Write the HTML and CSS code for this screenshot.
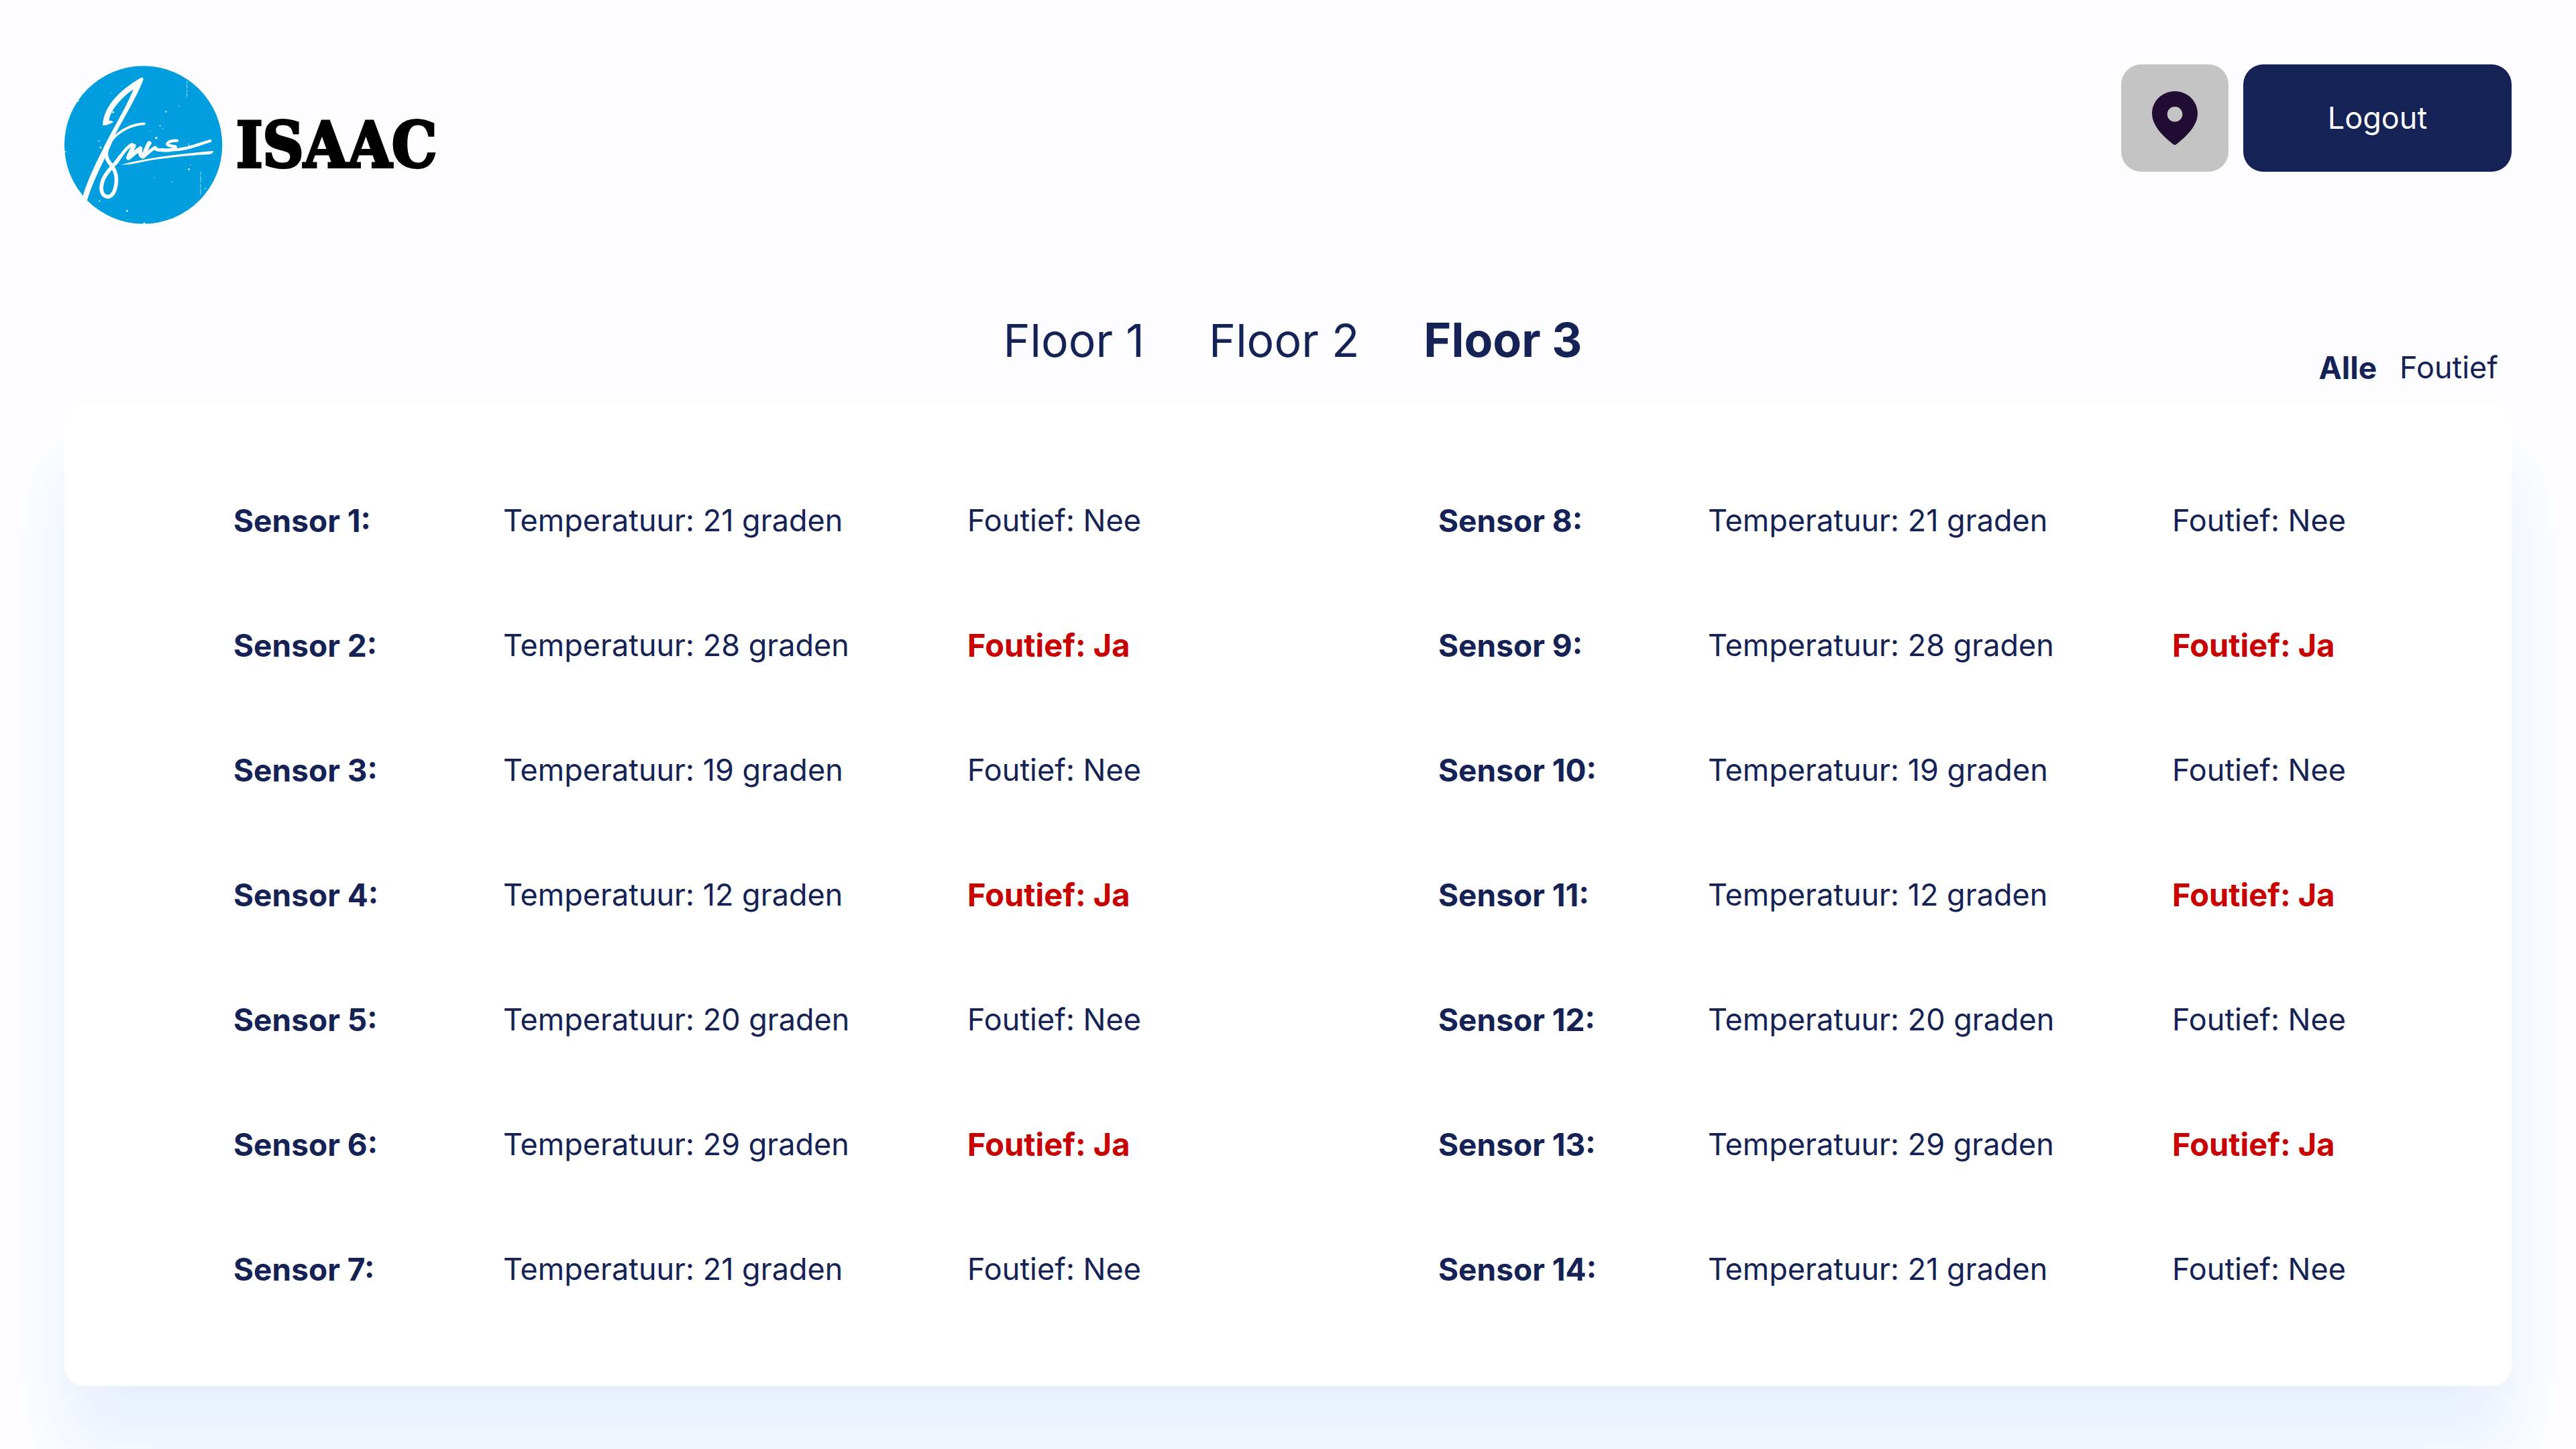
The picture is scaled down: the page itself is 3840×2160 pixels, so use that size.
FILE: index.html
```html
<!DOCTYPE html>
<html lang="nl">
<head>
  <meta charset="utf-8">
  <meta name="viewport" content="width=device-width, initial-scale=1">
  <title>ISAAC sensoren</title>
  <link rel="stylesheet" href="styles.css">
</head>
<body>
  <header class="header">
    <a class="logo" href="#">
      <svg class="logo-mark" viewBox="48 48 708 720" aria-hidden="true">
        <circle cx="401" cy="408" r="353" fill="#009ddf"/>
        <g fill="#fff">
          <path d="M386 110Q402 102 401 114C384 172 300 312 273 366C262 398 240 446 226 474C190 546 166 602 149 658L130 638C150 570 188 490 222 424C250 362 335 222 356 160C300 198 250 258 248 301Q262 296 267 307L235 320L219 320C224 232 300 160 386 110Z"/>
          <path d="M302 497C400 470 540 450 714 435Q714 445 700 450C580 456 440 472 378 488L340 495Z"/>
        </g>
        <g fill="none" stroke="#fff" stroke-linecap="round" stroke-linejoin="round">
          <path stroke-width="11" d="M405 313C350 316 300 342 266 378"/>
          <path stroke-width="17" d="M268 372C242 402 228 432 238 466C248 498 284 512 280 572C277 618 260 640 242 640C214 638 206 604 220 566C238 520 278 496 296 462"/>
          <path stroke-width="14" d="M280 488C305 450 325 420 348 407"/>
          <path stroke-width="19" d="M350 410L358 412C352 428 338 450 334 466C356 452 372 432 388 424C384 440 386 456 400 460C410 440 418 412 428 400"/>
          <path stroke-width="15" d="M404 458C424 442 440 426 454 420C456 430 470 432 488 430"/>
          <path stroke-width="13" d="M470 429C490 436 510 435 530 430C590 430 640 408 700 390"/>
          <path stroke-width="13" d="M552 389C520 388 496 402 514 410C526 414 548 412 546 420C540 430 510 430 484 432"/>
        </g>
        <g fill="#fff">
          <circle cx="459" cy="377" r="5"/><circle cx="476" cy="322" r="3"/><circle cx="488" cy="335" r="2"/>
          <circle cx="502" cy="259" r="4" opacity=".7"/><circle cx="560" cy="234" r="2"/><circle cx="266" cy="262" r="4"/>
          <circle cx="255" cy="174" r="2" opacity=".6"/><circle cx="210" cy="420" r="4"/><circle cx="202" cy="391" r="3"/>
          <circle cx="605" cy="517" r="4"/><circle cx="611" cy="497" r="2"/><circle cx="452" cy="553" r="2"/>
          <circle cx="529" cy="574" r="2"/><circle cx="205" cy="659" r="3"/><circle cx="328" cy="703" r="4"/>
          <circle cx="678" cy="604" r="3" opacity=".7"/><circle cx="109" cy="211" r="4"/><circle cx="405" cy="760" r="5"/>
          <circle cx="432" cy="345" r="2" opacity=".6"/><circle cx="52" cy="439" r="3"/>
        </g>
        <g fill="none" stroke="#fff" stroke-width="2">
          <path stroke-dasharray="12 4 18 6" d="M596 122V193"/>
          <path stroke-dasharray="16 5 26 8" d="M657 528V636"/>
          <path d="M604 400V418"/>
        </g>
      </svg>
      <span class="logo-name">ISAAC</span>
    </a>
    <div class="actions">
      <button class="button button-icon" type="button" aria-label="Locatie">
        <svg class="pin" viewBox="0 0 68 80" aria-hidden="true">
          <path fill="#210d33" fill-rule="evenodd" d="M34 0C15 0 0 15 0 33C0 53 20 70 32 79.300Q34 80.500 36 79.300C48 70 68 53 68 33C68 15 53 0 34 0ZM34 23A11.300 11.300 0 1 1 34 45.600A11.300 11.300 0 1 1 34 23Z"/>
        </svg>
      </button>
      <button class="button button-primary" type="button">Logout</button>
    </div>
  </header>

  <main class="main">
    <div class="toolbar">
      <nav class="tabs" aria-label="Verdieping">
        <a class="tab" href="#">Floor 1</a>
        <a class="tab" href="#">Floor 2</a>
        <a class="tab tab-active" href="#" aria-current="page">Floor 3</a>
      </nav>
      <nav class="filters" aria-label="Filter">
        <a class="filter filter-active" href="#" aria-current="true">Alle</a>
        <a class="filter" href="#">Foutief</a>
      </nav>
    </div>

    <section class="card">
      <table class="sensors">
        <tbody>
          <tr><th scope="row">Sensor 1:</th><td>Temperatuur: 21 graden</td><td>Foutief: Nee</td></tr>
          <tr><th scope="row">Sensor 2:</th><td>Temperatuur: 28 graden</td><td class="fault">Foutief: Ja</td></tr>
          <tr><th scope="row">Sensor 3:</th><td>Temperatuur: 19 graden</td><td>Foutief: Nee</td></tr>
          <tr><th scope="row">Sensor 4:</th><td>Temperatuur: 12 graden</td><td class="fault">Foutief: Ja</td></tr>
          <tr><th scope="row">Sensor 5:</th><td>Temperatuur: 20 graden</td><td>Foutief: Nee</td></tr>
          <tr><th scope="row">Sensor 6:</th><td>Temperatuur: 29 graden</td><td class="fault">Foutief: Ja</td></tr>
          <tr><th scope="row">Sensor 7:</th><td>Temperatuur: 21 graden</td><td>Foutief: Nee</td></tr>
        </tbody>
      </table>
      <table class="sensors">
        <tbody>
          <tr><th scope="row">Sensor 8:</th><td>Temperatuur: 21 graden</td><td>Foutief: Nee</td></tr>
          <tr><th scope="row">Sensor 9:</th><td>Temperatuur: 28 graden</td><td class="fault">Foutief: Ja</td></tr>
          <tr><th scope="row">Sensor 10:</th><td>Temperatuur: 19 graden</td><td>Foutief: Nee</td></tr>
          <tr><th scope="row">Sensor 11:</th><td>Temperatuur: 12 graden</td><td class="fault">Foutief: Ja</td></tr>
          <tr><th scope="row">Sensor 12:</th><td>Temperatuur: 20 graden</td><td>Foutief: Nee</td></tr>
          <tr><th scope="row">Sensor 13:</th><td>Temperatuur: 29 graden</td><td class="fault">Foutief: Ja</td></tr>
          <tr><th scope="row">Sensor 14:</th><td>Temperatuur: 21 graden</td><td>Foutief: Nee</td></tr>
        </tbody>
      </table>
    </section>
  </main>
</body>
</html>
```
FILE: styles.css
```css
* {
  box-sizing: border-box;
}

body {
  margin: 0;
  padding: 96px 96px 94px;
  background: #fdfdff;
  color: #152255;
  font-family: Inter, "Liberation Sans", sans-serif;
  font-size: 45px;
  line-height: 56px;
}

a {
  color: inherit;
  text-decoration: none;
}

.header {
  display: flex;
  justify-content: space-between;
  align-items: flex-start;
}

.logo {
  display: flex;
  align-items: center;
  gap: 20px;
}

.logo-mark {
  display: block;
  width: 236px;
  height: 240px;
}

.logo-name {
  color: #000;
  font-family: "DejaVu Serif Condensed", "DejaVu Serif", serif;
  font-size: 94px;
  font-weight: 700;
  line-height: 120px;
  -webkit-text-stroke: 4px #000;
}

.actions {
  display: flex;
  gap: 22px;
}

.button {
  display: flex;
  align-items: center;
  justify-content: center;
  height: 160px;
  padding: 0;
  border: 0;
  border-radius: 30px;
  font: inherit;
  cursor: pointer;
}

.button-icon {
  width: 160px;
  background: #c4c4c4;
}

.button-primary {
  width: 400px;
  background: #152255;
  color: #fff;
}

.pin {
  width: 68px;
  height: 80px;
}

.toolbar {
  display: grid;
  grid-template-columns: 1fr auto 1fr;
  align-items: end;
  margin-top: 129px;
}

.tabs {
  display: flex;
  grid-column: 2;
  gap: 96px;
  padding: 0 0 53px 14px;
  font-size: 68px;
  line-height: 84px;
}

.tab-active {
  font-size: 70px;
  font-weight: 700;
}

.filters {
  display: flex;
  justify-content: flex-end;
  gap: 34px;
  padding: 0 20px 26px 0;
}

.filter-active {
  font-size: 46px;
  font-weight: 700;
}

.card {
  display: grid;
  grid-template-columns: 1fr 1fr;
  column-gap: 444px;
  padding: 81px 248px 81px 252px;
  border-radius: 30px;
  background: #fff;
  box-shadow: 0 90px 100px #e7effe;
}

.sensors {
  width: 100%;
  border-collapse: collapse;
  table-layout: fixed;
  white-space: nowrap;
}

.sensors th,
.sensors td {
  height: 186px;
  padding: 0;
  text-align: left;
  vertical-align: middle;
}

.sensors th {
  width: 402px;
  font-size: 46px;
  font-weight: 700;
}

.sensors td:nth-child(2) {
  width: 692px;
}

.sensors .fault {
  color: #c80000;
  font-size: 47px;
  font-weight: 700;
}
```
